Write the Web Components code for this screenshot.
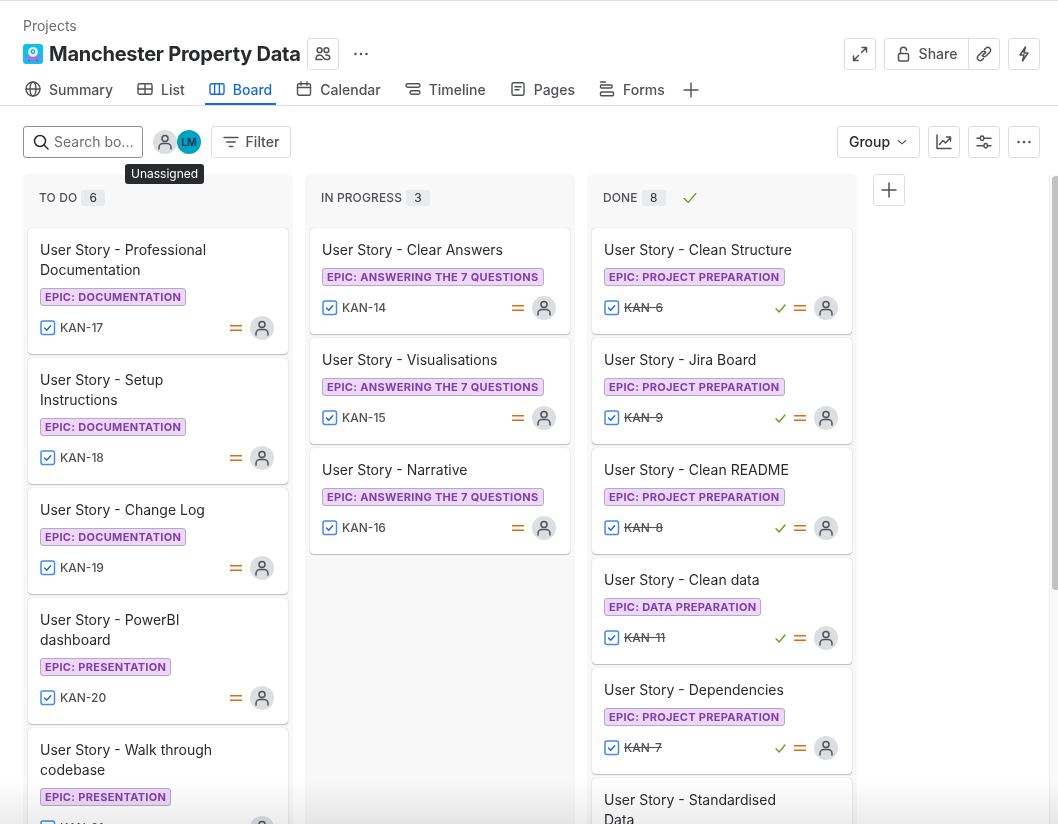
<!DOCTYPE html>
<html>
<head>
<meta charset="utf-8">
<title>Board</title>
<style>
  html, body { margin: 0; padding: 0; height: 100%; overflow: hidden; background: #fff; }
  body { font-family: Inter, "Liberation Sans", sans-serif; color: #292a2e; }
</style>
</head>
<body>
<jira-page>
  <project-header></project-header>
  <board-toolbar></board-toolbar>
  <board-column slot="columns" name="TO DO" count="6">
    <story-card epic="DOCUMENTATION" issue="KAN-17">User Story - Professional Documentation</story-card>
    <story-card epic="DOCUMENTATION" issue="KAN-18">User Story - Setup Instructions</story-card>
    <story-card epic="DOCUMENTATION" issue="KAN-19">User Story - Change Log</story-card>
    <story-card epic="PRESENTATION" issue="KAN-20">User Story - PowerBI dashboard</story-card>
    <story-card epic="PRESENTATION" issue="KAN-21">User Story - Walk through codebase</story-card>
  </board-column>
  <board-column slot="columns" name="IN PROGRESS" count="3">
    <story-card epic="ANSWERING THE 7 QUESTIONS" issue="KAN-14">User Story - Clear Answers</story-card>
    <story-card epic="ANSWERING THE 7 QUESTIONS" issue="KAN-15">User Story - Visualisations</story-card>
    <story-card epic="ANSWERING THE 7 QUESTIONS" issue="KAN-16">User Story - Narrative</story-card>
  </board-column>
  <board-column slot="columns" name="DONE" count="8" done>
    <story-card epic="PROJECT PREPARATION" issue="KAN-6" done>User Story - Clean Structure</story-card>
    <story-card epic="PROJECT PREPARATION" issue="KAN-9" done>User Story - Jira Board</story-card>
    <story-card epic="PROJECT PREPARATION" issue="KAN-8" done>User Story - Clean README</story-card>
    <story-card epic="DATA PREPARATION" issue="KAN-11" done>User Story - Clean data</story-card>
    <story-card epic="PROJECT PREPARATION" issue="KAN-7" done>User Story - Dependencies</story-card>
    <story-card epic="PROJECT PREPARATION" issue="KAN-10" done>User Story - Standardised Data</story-card>
  </board-column>
</jira-page>

<script>
// icons, all on a 16 box
const ICONS = {
  globe: '<circle cx="8" cy="8" r="7"/><ellipse cx="8" cy="8" rx="3" ry="7"/><path d="M1 8h14"/>',
  list: '<rect x="1" y="2.75" width="14" height="10.5" rx="1.5"/><path d="M1 8h14M8 2.75v10.5"/>',
  board: '<rect x="1" y="2.75" width="14" height="10.5" rx="1.5"/><path d="M5.6 2.75v10.5M10.4 2.75v10.5"/>',
  calendar: '<rect x="1.5" y="2.75" width="13" height="11.5" rx="1.5"/><path d="M1.5 6.5h13M5 .75v3.5M11 .75v3.5"/>',
  timeline: '<rect x="1" y="2.75" width="14" height="3.5" rx="1.75"/><rect x="5" y="9.75" width="10" height="3.5" rx="1.75"/>',
  pages: '<rect x="2" y="1.75" width="12" height="12.5" rx="1.5"/><path d="M5 5.75h6M5 8.75h4"/>',
  forms: '<path d="M1.5 1h5"/><rect x="1.5" y="4" width="11.5" height="3" rx=".75"/><rect x="1.5" y="11" width="13" height="3.75" rx=".9"/>',
  plus: '<path d="M8 1v14M1 8h14"/>',
  people: '<circle cx="4.6" cy="4.2" r="2.4"/><circle cx="11.4" cy="4.2" r="2.4"/><path d="M1 13.5c0-3 1.6-4.5 3.6-4.5 2 0 3 1.2 3.6 2.4.6 1.2 1.6 2.1 3.2 2.1h1.2c1.3 0 2.2-.9 2.2-1.9 0-1.6-1.6-2.6-4-2.6M1 13.5h6"/>',
  expand: '<path d="M9.5 6.5 14.5 1.5M10 1.5h4.5V6M6.5 9.5l-5 5M1.5 10v4.5H6"/>',
  lock: '<rect x="2.5" y="7.5" width="10" height="7.5" rx="1.5"/><path d="M4.5 7.5V4.2a3 3 0 0 1 6 0"/>',
  link: '<path d="M6.6 9.4 9.6 6.4M8.6 3.4l1.2-1.2a2.8 2.8 0 0 1 4 4l-3.6 3.6a2.8 2.8 0 0 1-4 0M7.4 12.6l-1.2 1.2a2.8 2.8 0 0 1-4-4l3.6-3.6a2.8 2.8 0 0 1 4 0"/>',
  bolt: '<path d="M9.5 1 4 9h4l-1.5 6L12 7H8z"/>',
  search: '<circle cx="7" cy="7" r="5.5"/><path d="M11 11l4 4"/>',
  filter: '<path d="M1 3.5h14M3.8 8h8.4M6.4 12.5h3.2"/>',
  chart: '<path d="M1 1v13.5h14M3.5 10.5 7 6.5l2.5 2.5 5-5.5M10.5 3h4v4"/>',
  sliders: '<path d="M1 4.25h3M8.5 4.25H15M1 11.75h6.5M12 11.75h3"/><rect x="4.4" y="2" width="3.4" height="4.5" rx="1.7"/><rect x="8" y="9.5" width="3.4" height="4.5" rx="1.7"/>',
  chevron: '<path d="M3 6l5 4.5L13 6"/>',
  check: '<path d="M1.5 8.5 6 13 14.5 3"/>'
};

function icon(name, size = 16, color = '#505258', width = 1.5) {
  return `<svg width="${size}" height="${size}" viewBox="0 0 16 16" fill="none" stroke="${color}" stroke-width="${width}" stroke-linecap="round" stroke-linejoin="round" style="display:block;flex:none">${ICONS[name]}</svg>`;
}
const DOTS = `<svg width="16" height="16" viewBox="0 0 16 16" fill="#505258" style="display:block"><circle cx="2.5" cy="8" r="1.25"/><circle cx="8" cy="8" r="1.25"/><circle cx="13.5" cy="8" r="1.25"/></svg>`;
const PERSON = `<svg width="16" height="16" viewBox="0 0 16 16" fill="none" stroke="#505258" stroke-width="1.5" stroke-linecap="round" style="display:block"><circle cx="8" cy="4.5" r="3"/><path d="M2 15v-1.5c0-2.6 2-4 4-4h4c2 0 4 1.4 4 4V15"/></svg>`;

class JiraPage extends HTMLElement {
  constructor() {
    super();
    this.attachShadow({ mode: "open" }).innerHTML = `
      <style>
        :host {
          display: flex;
          flex-direction: column;
          height: 824px;
          overflow: hidden;
          position: relative;
          border-top: 1px solid #dddee1;
          box-sizing: border-box;
          font-family: Inter, "Liberation Sans", sans-serif;
        }
        .columns {
          display: flex;
          gap: 12px;
          padding: 0 0 0 23px;
          flex: 1;
          min-height: 0;
          align-items: stretch;
        }
        .add {
          width: 32px;
          height: 32px;
          box-sizing: border-box;
          border: 1px solid #dddee1;
          border-radius: 3px;
          display: flex;
          align-items: center;
          justify-content: center;
          margin-left: 4px;
        }
        .track {
          position: absolute;
          right: 0;
          top: 173px;
          bottom: 0;
          width: 9px;
          box-sizing: border-box;
          border-left: 1px solid #ececec;
          background: #fafafa;
        }
        .thumb {
          position: absolute;
          top: 2px;
          left: 2px;
          right: 0;
          height: 414px;
          background: #c2c2c2;
          border-radius: 4px 0 0 4px;
        }
        /* multiply keeps the text dark while the white goes grey */
        .fade {
          position: absolute;
          left: 0;
          right: 0;
          bottom: 0;
          height: 44px;
          background: linear-gradient(to bottom, #fff, #ececec);
          mix-blend-mode: multiply;
          pointer-events: none;
        }
      </style>
      <slot></slot>
      <div class="columns">
        <slot name="columns"></slot>
        <div class="add">${icon("plus", 16, "#505258", 1.5)}</div>
      </div>
      <div class="track"><div class="thumb"></div></div>
      <div class="fade"></div>
    `;
  }
}

class NavTab extends HTMLElement {
  constructor() {
    super();
    this.attachShadow({ mode: "open" });
  }
  connectedCallback() {
    const on = this.hasAttribute("active");
    this.shadowRoot.innerHTML = `
      <style>
        :host {
          display: flex;
          align-items: center;
          gap: 8px;
          height: 30px;
          padding: 0 4px;
          box-sizing: border-box;
          font-size: 14px;
          font-weight: 500;
          color: ${on ? "#1868db" : "#505258"};
          border-bottom: 2px solid ${on ? "#1868db" : "transparent"};
        }
      </style>
      ${icon(this.getAttribute("icon"), 16, on ? "#1868db" : "#505258", 1.4)}
      <slot></slot>
    `;
  }
}

class SquareButton extends HTMLElement {
  constructor() {
    super();
    this.attachShadow({ mode: "open" }).innerHTML = `
      <style>
        :host {
          display: flex;
          align-items: center;
          justify-content: center;
          gap: 6px;
          height: 32px;
          min-width: 32px;
          box-sizing: border-box;
          border: 1px solid #dddee1;
          border-radius: 3px;
          font-size: 14px;
          font-weight: 500;
          color: #505258;
          background: #fff;
        }
      </style>
      <slot></slot>
    `;
  }
}

class ProjectHeader extends HTMLElement {
  constructor() {
    super();
    this.attachShadow({ mode: "open" }).innerHTML = `
      <style>
        :host {
          display: block;
          height: 105px;
          box-sizing: border-box;
          border-bottom: 1px solid #dddee1;
          padding: 17px 18px 0 23px;
          font-family: Inter, "Liberation Sans", sans-serif;
        }
        .crumb { font-size: 14px; line-height: 16px; color: #6b6e76; }
        .row { display: flex; align-items: center; margin-top: 4px; height: 32px; }
        .logo { width: 20px; height: 20px; margin-right: 6px; flex: none; display: block; }
        h1 { margin: 0; font-size: 20px; line-height: 24px; font-weight: 650; letter-spacing: -.25px; color: #292a2e; white-space: nowrap; }
        .row > square-button { margin-left: 8px; }
        .row > .people { margin-left: 6px; }
        .more { margin-left: 14px; margin-right: auto; }
        .share { display: flex; margin-left: 8px; }
        .share span { margin-bottom: 2px; }
        .grp1 { width: 85px; border-radius: 3px 0 0 3px; gap: 7px; }
        .grp2 { margin-left: -1px; border-radius: 0 3px 3px 0; }
        .tabs { display: flex; gap: 16px; margin: 5px 0 0 -2px; }
        .plus { display: flex; align-items: center; height: 30px; margin-left: -2px; }
      </style>
      <div class="crumb">Projects</div>
      <div class="row">
        <svg class="logo" viewBox="0 0 20 20">
          <rect width="20" height="20" rx="3" fill="#12bfea"/>
          <ellipse cx="10" cy="13" rx="7" ry="4.5" fill="#8f7ee0"/>
          <path d="M5 16.5h2M13 16.5h2" stroke="#6a58c4" stroke-width="1.4"/>
          <circle cx="10" cy="8" r="5" fill="#d8f4fb"/>
          <circle cx="10" cy="7.6" r="2.3" fill="#12a6d6"/>
          <circle cx="10" cy="7.6" r="1" fill="#e8fbff"/>
        </svg>
        <h1>Manchester Property Data</h1>
        <square-button class="people">${icon("people")}</square-button>
        <span class="more">${DOTS}</span>
        <square-button>${icon("expand")}</square-button>
        <div class="share">
          <square-button class="grp1">${icon("lock")}<span>Share</span></square-button>
          <square-button class="grp2">${icon("link")}</square-button>
        </div>
        <square-button>${icon("bolt")}</square-button>
      </div>
      <div class="tabs">
        <nav-tab icon="globe">Summary</nav-tab>
        <nav-tab icon="list">List</nav-tab>
        <nav-tab icon="board" active>Board</nav-tab>
        <nav-tab icon="calendar">Calendar</nav-tab>
        <nav-tab icon="timeline">Timeline</nav-tab>
        <nav-tab icon="pages">Pages</nav-tab>
        <nav-tab icon="forms">Forms</nav-tab>
        <span class="plus">${icon("plus", 16, "#505258", 1.4)}</span>
      </div>
    `;
  }
}

class BoardToolbar extends HTMLElement {
  constructor() {
    super();
    this.attachShadow({ mode: "open" }).innerHTML = `
      <style>
        :host {
          display: flex;
          align-items: center;
          height: 32px;
          margin: 20px 18px 16px 23px;
          position: relative;
          font-family: Inter, "Liberation Sans", sans-serif;
        }
        .search {
          width: 120px;
          height: 32px;
          box-sizing: border-box;
          border: 1px solid #8c8f97;
          border-radius: 3px;
          display: flex;
          align-items: center;
          gap: 5px;
          padding-left: 9px;
          font-size: 14px;
          color: #6b6e76;
          white-space: nowrap;
        }
        .search span { margin-bottom: 2px; }
        .avatar {
          width: 24px;
          height: 24px;
          border-radius: 50%;
          display: flex;
          align-items: center;
          justify-content: center;
          box-sizing: border-box;
        }
        .none { background: #dddee1; margin-left: 10px; }
        .lm {
          background: #00a3bf;
          color: #0b3a5c;
          font-size: 10.5px;
          font-weight: 700;
        }
        .filter { width: 80px; margin-left: 10px; }
        .filter span { margin: 0 0 2px 1px; }
        .tip {
          position: absolute;
          left: 102px;
          top: 38px;
          height: 20px;
          padding: 0 6px;
          background: #292a2e;
          color: #fff;
          font-size: 12px;
          line-height: 19px;
          border-radius: 3px;
          white-space: nowrap;
        }
        .right { margin-left: auto; display: flex; gap: 8px; }
        .group { width: 83px; color: #292a2e; }
        .group span { margin-bottom: 2px; }
      </style>
      <div class="search">${icon("search", 16, "#292a2e", 1.5)}<span>Search bo...</span></div>
      <div class="avatar none">${PERSON}</div>
      <div class="avatar lm">LM</div>
      <square-button class="filter">${icon("filter")}<span>Filter</span></square-button>
      <div class="tip">Unassigned</div>
      <div class="right">
        <square-button class="group"><span>Group</span>${icon("chevron", 12, "#505258", 1.4)}</square-button>
        <square-button>${icon("chart")}</square-button>
        <square-button>${icon("sliders")}</square-button>
        <square-button>${DOTS}</square-button>
      </div>
    `;
  }
}

class BoardColumn extends HTMLElement {
  constructor() {
    super();
    this.attachShadow({ mode: "open" });
  }
  connectedCallback() {
    const done = this.hasAttribute("done");
    this.shadowRoot.innerHTML = `
      <style>
        :host {
          display: flex;
          flex-direction: column;
          gap: 4px;
          width: 270px;
          flex: none;
          box-sizing: border-box;
          background: #f8f8f8;
          border-radius: 6px 6px 0 0;
          padding: 0 5px;
          overflow: hidden;
          font-family: Inter, "Liberation Sans", sans-serif;
        }
        .head {
          display: flex;
          align-items: center;
          height: 50px;
          flex: none;
          padding: 0 0 3px 11px;
          box-sizing: border-box;
          font-size: 12px;
          font-weight: 500;
          letter-spacing: .12px;
          color: #505258;
        }
        .count {
          margin-left: 4px;
          width: 24px;
          height: 16px;
          border-radius: 3px;
          background: #e9eaec;
          color: #292a2e;
          display: flex;
          align-items: center;
          justify-content: center;
          font-size: 12px;
          font-weight: 400;
        }
        .tick { margin-left: 17px; }
      </style>
      <div class="head">
        <span>${this.getAttribute("name")}</span>
        <span class="count">${this.getAttribute("count")}</span>
        ${done ? `<span class="tick">${icon("check", 14, "#6a9a23", 1.6)}</span>` : ""}
      </div>
      <slot></slot>
    `;
  }
}

class StoryCard extends HTMLElement {
  constructor() {
    super();
    this.attachShadow({ mode: "open" });
  }
  connectedCallback() {
    const done = this.hasAttribute("done");
    this.shadowRoot.innerHTML = `
      <style>
        :host {
          display: block;
          flex: none;
          box-sizing: border-box;
          background: #fff;
          border-radius: 4px;
          padding: 12px 14px 14px 12px;
          box-shadow: 0 1px 1px rgba(30,31,33,.25), 0 0 1px rgba(30,31,33,.31);
          font-family: Inter, "Liberation Sans", sans-serif;
        }
        .title { font-size: 14px; line-height: 20px; color: #292a2e; padding-right: 34px; }
        .epic {
          display: inline-block;
          margin-top: 8px;
          height: 18px;
          box-sizing: border-box;
          padding: 0 4px;
          background: #eed7fc;
          border: 1px solid #b7aabf;
          border-radius: 3px;
          font-size: 11px;
          line-height: 16px;
          font-weight: 700;
          letter-spacing: .32px;
          color: #803fa5;
          white-space: nowrap;
          vertical-align: top;
        }
        .epic-row { height: 26px; }
        .foot { display: flex; align-items: center; height: 24px; margin-top: 10px; }
        .box { margin-right: 4px; }
        .key { font-size: 12px; color: #505258; font-weight: 500; margin-bottom: 1px; ${done ? "text-decoration: line-through;" : ""} }
        .end { margin-left: auto; display: flex; align-items: center; }
        .prio { margin-left: 8px; margin-right: 8px; display: block; }
        .avatar { width: 24px; height: 24px; border-radius: 50%; background: #dddee1; display: flex; align-items: center; justify-content: center; }
      </style>
      <div class="title"><slot></slot></div>
      <div class="epic-row"><span class="epic">EPIC: ${this.getAttribute("epic")}</span></div>
      <div class="foot">
        <svg class="box" width="16" height="16" viewBox="0 0 16 16" fill="none">
          <rect x="1" y="1" width="13.5" height="13.5" rx="2" stroke="#4688ec" stroke-width="1.5"/>
          <path d="M4.5 8l2.2 2.3 4-4.6" stroke="#1868db" stroke-width="1.4" stroke-linecap="round" stroke-linejoin="round"/>
        </svg>
        <span class="key">${this.getAttribute("issue")}</span>
        <div class="end">
          ${done ? icon("check", 11, "#6a9a23", 2) : ""}
          <svg class="prio" width="12" height="6" viewBox="0 0 12 6"><path d="M0 .8h12M0 5.2h12" stroke="#e56910" stroke-width="1.5"/></svg>
          <div class="avatar">${PERSON}</div>
        </div>
      </div>
    `;
  }
}

customElements.define("square-button", SquareButton);
customElements.define("nav-tab", NavTab);
customElements.define("project-header", ProjectHeader);
customElements.define("board-toolbar", BoardToolbar);
customElements.define("board-column", BoardColumn);
customElements.define("story-card", StoryCard);
customElements.define("jira-page", JiraPage);
</script>
</body>
</html>
